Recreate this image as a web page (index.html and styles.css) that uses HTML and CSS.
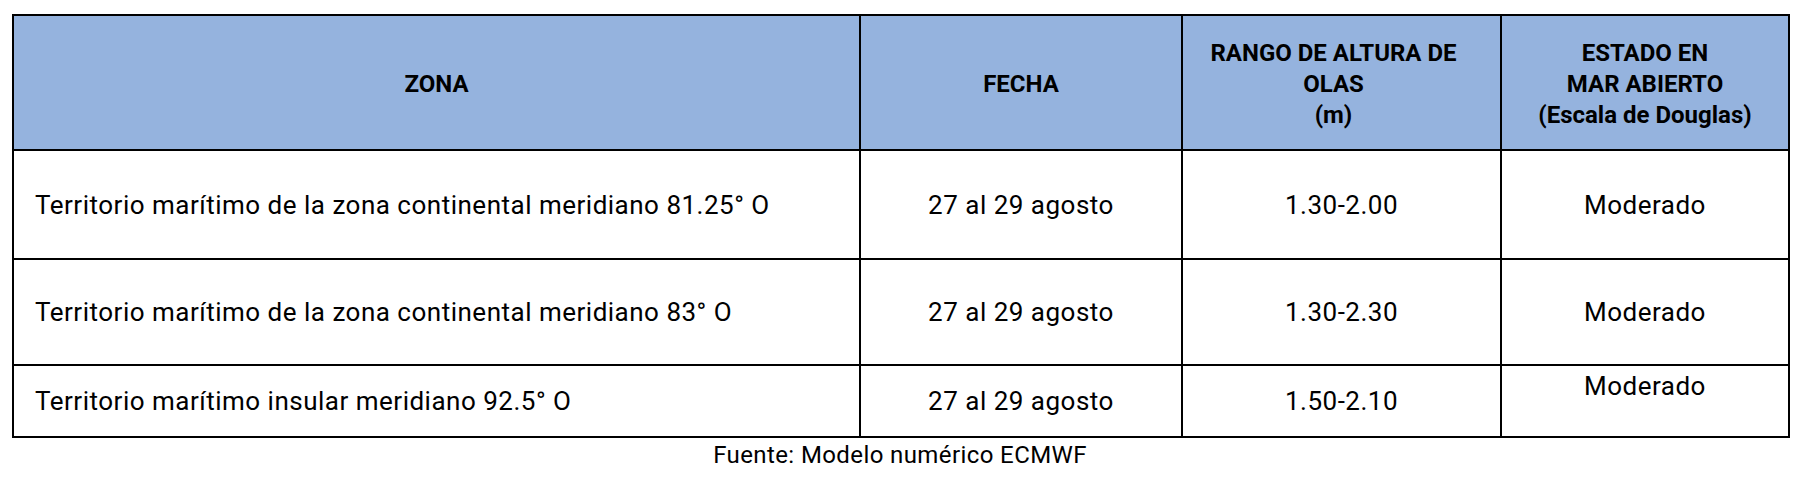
FILE: index.html
```html
<!DOCTYPE html>
<html lang="es">
<head>
<meta charset="utf-8">
<link rel="stylesheet" href="styles.css">
</head>
<body>
<div class="wrap">
  <table class="waves">
    <colgroup>
      <col class="c-zona">
      <col class="c-fecha">
      <col class="c-rango">
      <col class="c-estado">
    </colgroup>
    <thead>
      <tr class="head-row">
        <th>ZONA</th>
        <th>FECHA</th>
        <th class="rango">RANGO DE ALTURA DE<br>OLAS<br>(m)</th>
        <th>ESTADO EN<br>MAR ABIERTO<br>(Escala de Douglas)</th>
      </tr>
    </thead>
    <tbody>
      <tr class="row-tall">
        <td class="zona">Territorio marítimo de la zona continental meridiano 81.25° O</td>
        <td>27 al 29 agosto</td>
        <td>1.30-2.00</td>
        <td>Moderado</td>
      </tr>
      <tr class="row-mid">
        <td class="zona">Territorio marítimo de la zona continental meridiano 83° O</td>
        <td>27 al 29 agosto</td>
        <td>1.30-2.30</td>
        <td>Moderado</td>
      </tr>
      <tr class="row-short">
        <td class="zona">Territorio marítimo insular meridiano 92.5° O</td>
        <td>27 al 29 agosto</td>
        <td>1.50-2.10</td>
        <td class="top">Moderado</td>
      </tr>
    </tbody>
  </table>
  <p class="source">Fuente: Modelo numérico ECMWF</p>
</div>
</body>
</html>
```

FILE: styles.css
```css
html, body {
  margin: 0;
  padding: 0;
  background: #ffffff;
}

body {
  font-family: Roboto, "Liberation Sans", sans-serif;
  color: #000000;
}

.wrap {
  padding: 14px 0 0 12px;
  width: 1776px;
}

.waves {
  border-collapse: collapse;
  width: 1776px;
  table-layout: fixed;
}

.c-zona { width: 847px; }
.c-fecha { width: 322px; }
.c-rango { width: 319px; }
.c-estado { width: 288px; }

.waves th,
.waves td {
  border: 2px solid #000000;
  padding: 0;
  text-align: center;
  vertical-align: middle;
}

.waves th {
  background: #95b3de;
  font-weight: 700;
  font-size: 24px;
  line-height: 31px;
  padding-top: 4px;
}

.waves th.rango {
  padding-right: 16px;
}

.waves td {
  font-size: 26px;
  line-height: 30px;
  letter-spacing: 0.5px;
}

.head-row { height: 135px; }
.row-tall { height: 109px; }
.row-mid { height: 106px; }
.row-short { height: 72px; }

.waves td.zona {
  text-align: left;
  padding-left: 21px;
}

.waves td.top {
  vertical-align: top;
  padding-top: 5px;
}

.source {
  margin: 3px 0 0 0;
  text-align: center;
  font-size: 24px;
  line-height: 28px;
  letter-spacing: 0.4px;
}
```
